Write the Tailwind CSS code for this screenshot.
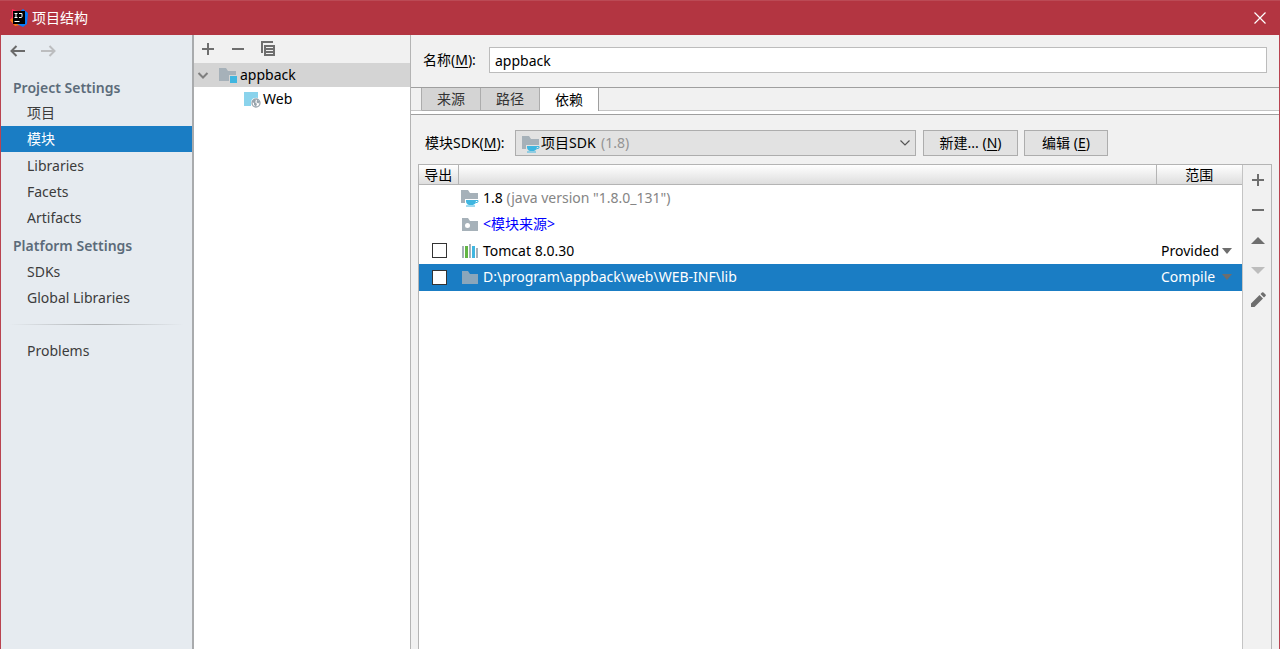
<!DOCTYPE html>
<html lang="zh-CN">
<head>
  <meta charset="UTF-8">
  <meta name="viewport" content="width=device-width, initial-scale=1.0">
  <title>项目结构</title>
  <script src="https://cdn.jsdelivr.net/npm/@tailwindcss/browser@4"></script>
</head>
<body class="h-screen flex flex-col overflow-hidden bg-[#f1f1f1] text-black text-sm font-['Noto_Sans','Noto_Sans_CJK_SC',sans-serif]">

  <!-- shared icons -->
  <svg class="hidden">
    <symbol id="folder" viewBox="0 0 18 16">
      <path d="M1 2h6l2 3h8v10H1z" fill="#a6b1b9"/>
    </symbol>
    <symbol id="sdk" viewBox="0 0 18 18">
      <path d="M0 1h7l2 3h8v6H4v4H0z" fill="#a6b1b9"/>
      <path d="M5 11h10v1q-.5 3-3 4H8q-3-1-3-4z" fill="#40b6e0"/>
      <path d="M14 11.500h3v1.500l-3 1M5 17h9" fill="none" stroke="#40b6e0"/>
    </symbol>
    <symbol id="plus" viewBox="0 0 12 12">
      <path d="M6 0v12M0 6h12" stroke="#6e6e6e" stroke-width="2"/>
    </symbol>
    <symbol id="minus" viewBox="0 0 12 12">
      <path d="M0 6h12" stroke="#6e6e6e" stroke-width="2"/>
    </symbol>
  </svg>

  <!-- title bar -->
  <header class="h-[35px] shrink-0 flex items-center bg-[#b33541] border-t border-[#bb4a55] pl-[10px] pr-[14px] text-white">
    <svg class="w-[18px] h-[18px] mr-1" viewBox="0 0 18 18">
      <path d="M2 0l6 2 2 8-6 6-4-5 2-3z" fill="#fe315d"/>
      <path d="M0 11l3-2 7 7-5 1z" fill="#f97a12"/>
      <path d="M9 3l4-3 5 4-1 11-4 3-6-3z" fill="#087cfa"/>
      <path d="M3 2h12v13H3z" fill="#000"/>
      <path d="M4.500 4.500h3M6 4.500v4M4.500 8.500h3M9 4.500h3v3q0 1-1 1H9M4.500 12.500h5" fill="none" stroke="#fff"/>
    </svg>
    <h1 class="grow">项目结构</h1>
    <button type="button" aria-label="关闭">
      <svg class="w-3 h-3" viewBox="0 0 12 12"><path d="M.5.500l11 11M11.500.500l-11 11" stroke="#fff" stroke-width="1.200"/></svg>
    </button>
  </header>

  <div class="grow min-h-0 flex border-x border-[#b94350]">

    <!-- settings list -->
    <nav class="w-[193px] shrink-0 bg-[#e6ebf0] border-r-2 border-[#a9abad] text-[#3c3c3c]">
      <div class="h-8 flex items-center gap-[14px] pl-[9px]">
        <button type="button" aria-label="后退">
          <svg class="w-4 h-3" viewBox="0 0 16 12"><path d="M1.500 6H15M6.500 1L1.500 6l5 5" fill="none" stroke="#6a6a6a" stroke-width="2"/></svg>
        </button>
        <button type="button" aria-label="前进" disabled>
          <svg class="w-4 h-3" viewBox="0 0 16 12"><path d="M14.500 6H1M9.500 1l5 5-5 5" fill="none" stroke="#bcbdbf" stroke-width="2"/></svg>
        </button>
      </div>
      <h2 class="mt-2 h-[25px] leading-[26px] pl-3 font-semibold text-[#5c6b7a]">Project Settings</h2>
      <a href="#" class="block h-[26px] leading-[26px] pl-[26px]">项目</a>
      <a href="#" class="block h-[26px] leading-[26px] pl-[26px] mb-px bg-[#1a7dc4] text-white">模块</a>
      <a href="#" class="block h-[26px] leading-[26px] pl-[26px]">Libraries</a>
      <a href="#" class="block h-[26px] leading-[26px] pl-[26px]">Facets</a>
      <a href="#" class="block h-[26px] leading-[26px] pl-[26px]">Artifacts</a>
      <h2 class="mt-0.5 h-[26px] leading-[26px] pl-3 font-semibold text-[#5c6b7a]">Platform Settings</h2>
      <a href="#" class="block h-[26px] leading-[26px] pl-[26px]">SDKs</a>
      <a href="#" class="block h-[26px] leading-[26px] pl-[26px]">Global Libraries</a>
      <div class="h-px mx-2 my-[13px] bg-linear-to-r from-transparent via-[#b0b3b6] to-transparent"></div>
      <a href="#" class="block h-[26px] leading-[26px] pl-[26px]">Problems</a>
    </nav>

    <!-- module tree -->
    <section class="w-[217px] shrink-0 bg-white border-r border-[#b4b4b4]">
      <div class="h-7 flex items-center bg-[#f1f1f1] pl-2">
        <button type="button" aria-label="添加" class="mr-[18px]"><svg class="w-3 h-3"><use href="#plus"/></svg></button>
        <button type="button" aria-label="删除" class="mr-4"><svg class="w-3 h-3"><use href="#minus"/></svg></button>
        <button type="button" aria-label="复制">
          <svg class="w-4 h-4" viewBox="0 0 16 16">
            <path d="M2 12V1h11" fill="none" stroke="#6e6e6e" stroke-width="2"/>
            <path d="M4 4h11v11H4z" fill="#6e6e6e"/>
            <path d="M6 6.500h7M6 9.500h7M6 12.500h7" stroke="#f1f1f1"/>
          </svg>
        </button>
      </div>
      <ul>
        <li class="h-6 flex items-center bg-[#d4d4d4] pl-[3px]">
          <svg class="w-3 h-3 mr-2.5" viewBox="0 0 12 12"><path d="M1.500 4L6 8.500 10.500 4" fill="none" stroke="#7f7f7f" stroke-width="2"/></svg>
          <svg class="w-[19px] h-[18px] mr-[2px]" viewBox="0 0 19 18">
            <path d="M0 2h7l2 3h8v4h-7v6H0z" fill="#a6b1b9"/>
            <path d="M11 10h7v7h-7z" fill="#40b6e0"/>
          </svg>
          appback
        </li>
        <li class="h-6 flex items-center pl-[50px]">
          <svg class="w-[17px] h-[17px] mr-[2px]" viewBox="0 0 17 17">
            <path d="M0 1h14v6q-6-1-7 4v4H0z" fill="#8ad3ec"/>
            <circle cx="12" cy="12" r="4" fill="#fff" stroke="#98a4ad" stroke-width="1.300"/>
            <path d="M8 10l3-2 1 2-1 1 2 2-1 2.500-2-1.500v-2l-2-1zM13 8.500l2.500 2-1 2-2-1z" fill="#98a4ad"/>
          </svg>
          Web
        </li>
      </ul>
    </section>

    <!-- module editor -->
    <main class="grow min-w-0 flex flex-col">
      <div class="h-[50px] mb-0.5 shrink-0 flex items-center px-3">
        <label for="name" class="w-[66px] shrink-0">名称(<u class="underline-offset-2">M</u>):</label>
        <input id="name" type="text" value="appback" class="grow h-[26px] px-[5px] bg-white border border-[#bcbcbc]">
      </div>

      <!-- tabs -->
      <div role="tablist" class="h-[28px] shrink-0 flex items-start border-t border-b border-[#9f9f9f] bg-white">
        <span class="w-[11px] h-[23px] border-b border-[#c4c4c4] border-r border-r-[#acacac] bg-[#f1f1f1]"></span>
        <button type="button" role="tab" class="w-[59px] h-[23px] bg-[#d4d4d4] border-r border-b border-[#acacac] text-[#333]">来源</button>
        <button type="button" role="tab" class="w-[59px] h-[23px] bg-[#d4d4d4] border-r border-b border-[#acacac] text-[#333]">路径</button>
        <button type="button" role="tab" aria-selected="true" class="w-[59px] h-[23px] bg-white border-r border-[#9f9f9f]">依赖</button>
        <span class="grow h-[23px] border-b border-[#c4c4c4] bg-[#f1f1f1]"></span>
      </div>

      <!-- sdk -->
      <div class="h-[49px] shrink-0 flex items-center pt-[7px] pl-[14px]">
        <label for="sdkSelect" class="w-[90px] shrink-0">模块SDK(<u class="underline-offset-2">M</u>):</label>
        <div class="relative w-[401px] mr-[7px]">
          <select id="sdkSelect" class="appearance-none block w-full h-[26px] pl-[25px] bg-[#e2e2e2] border border-[#adadad]">
            <option>项目SDK</option>
          </select>
          <svg class="absolute left-[7px] top-[5px] w-[18px] h-[18px] pointer-events-none"><use href="#sdk"/></svg>
          <span class="absolute left-[86px] top-[3px] text-[#949494] pointer-events-none">(1.8)</span>
          <svg class="absolute right-[6px] top-[10px] w-[10px] h-[6px] pointer-events-none" viewBox="0 0 10 6"><path d="M.5.500L5 5 9.500.500" fill="none" stroke="#555" stroke-width="1.200"/></svg>
        </div>
        <button type="button" class="w-[95px] h-[26px] mr-[6px] bg-[#e2e2e2] border border-[#adadad]">新建... (<u class="underline-offset-2">N</u>)</button>
        <button type="button" class="w-[84px] h-[26px] bg-[#e2e2e2] border border-[#adadad]">编辑 (<u class="underline-offset-2">E</u>)</button>
      </div>

      <!-- dependencies -->
      <div class="grow min-h-0 flex mx-[7px] border-t border-x border-[#b4b4b4]">
        <div class="grow bg-white">
          <table class="w-full table-fixed border-collapse">
            <thead>
              <tr class="h-[19px] bg-linear-to-b from-white to-[#dedede] border-b border-[#b4b4b4] leading-[19px]">
                <th class="w-[39px] p-0 font-normal border-r border-[#b4b4b4]">导出</th>
                <th class="p-0 border-r border-[#b4b4b4]"></th>
                <th class="w-[86px] p-0 font-normal">范围</th>
              </tr>
            </thead>
            <tbody>
              <tr class="h-[26px]">
                <td></td>
                <td class="p-0 pl-[3px]"><div class="flex items-center">
                  <svg class="w-[18px] h-[18px] mr-1"><use href="#sdk"/></svg>
                  <span>1.8 <span class="text-[#858585]">(java version "1.8.0_131")</span></span>
                </div></td>
                <td></td>
              </tr>
              <tr class="h-[27px]">
                <td></td>
                <td class="p-0 pl-[3px]"><div class="flex items-center">
                  <svg class="w-[18px] h-4 mr-1" viewBox="0 0 18 16">
                    <path d="M1 2h6l2 3h8v10H1z" fill="#a6b1b9"/>
                    <circle cx="6.500" cy="9.500" r="2.500" fill="#fff"/>
                  </svg>
                  <span class="text-[#0000ff]">&lt;模块来源&gt;</span>
                </div></td>
                <td></td>
              </tr>
              <tr class="h-[26px]">
                <td class="p-0 pl-[13px]"><input type="checkbox" aria-label="导出 Tomcat 8.0.30" class="appearance-none block w-[15px] h-[15px] bg-white border border-[#333]"></td>
                <td class="p-0 pl-[3px]"><div class="flex items-center">
                  <svg class="w-[18px] h-4 mr-1" viewBox="0 0 18 16">
                    <path d="M1 3h2v12H1zM8 1h2v14H8zM15 5h2v10h-2z" fill="#a6b1b9"/>
                    <path d="M4 3h3v12H4z" fill="#62b543"/>
                    <path d="M11 3h3v12h-3z" fill="#40b6e0"/>
                  </svg>
                  Tomcat 8.0.30
                </div></td>
                <td class="p-0"><div class="relative">
                  <select aria-label="范围" class="appearance-none block w-full pl-[5px]"><option>Provided</option></select>
                  <svg class="absolute right-[10px] top-[7px] w-[10px] h-[6px] pointer-events-none" viewBox="0 0 10 6"><path d="M0 0h10L5 6z" fill="#6e6e6e"/></svg>
                </div></td>
              </tr>
              <tr class="h-[27px] bg-[#1a7dc4] text-white">
                <td class="p-0 pl-[13px]"><input type="checkbox" aria-label="导出 lib" class="appearance-none block w-[15px] h-[15px] bg-white border border-[#333]"></td>
                <td class="p-0 pl-[3px]"><div class="flex items-center">
                  <svg class="w-[18px] h-4 mr-1 opacity-80"><use href="#folder"/></svg>
                  D:\program\appback\web\WEB-INF\lib
                </div></td>
                <td class="p-0"><div class="relative">
                  <select aria-label="范围" class="appearance-none block w-full pl-[5px]"><option>Compile</option></select>
                  <svg class="absolute right-[10px] top-[7px] w-[10px] h-[6px] pointer-events-none" viewBox="0 0 10 6"><path d="M0 0h10L5 6z" fill="#6e6e6e"/></svg>
                </div></td>
              </tr>
            </tbody>
          </table>
        </div>

        <!-- side buttons -->
        <div class="w-[29px] shrink-0 flex flex-col items-center border-l border-[#c4c4c4] pl-px">
          <button type="button" aria-label="添加" class="h-[30px]"><svg class="w-3 h-3"><use href="#plus"/></svg></button>
          <button type="button" aria-label="删除" class="h-[30px]"><svg class="w-3 h-3"><use href="#minus"/></svg></button>
          <button type="button" aria-label="上移" class="h-[30px]"><svg class="w-[14px] h-[7px]" viewBox="0 0 14 7"><path d="M0 7h14L7 0z" fill="#6e6e6e"/></svg></button>
          <button type="button" aria-label="下移" disabled class="h-[30px]"><svg class="w-[14px] h-[7px]" viewBox="0 0 14 7"><path d="M0 0h14L7 7z" fill="#bdbdbd"/></svg></button>
          <button type="button" aria-label="编辑" class="h-[30px]">
            <svg class="w-4 h-4" viewBox="0 0 16 16"><path d="M1 11.500L9.500 3l3.500 3.500L4.500 15H1zM10.500 2l1.500-1.500q.7-.7 1.500 0l2 2q.7.7 0 1.500L14 5.500z" fill="#6e6e6e"/></svg>
          </button>
        </div>
      </div>
    </main>
  </div>
</body>
</html>
